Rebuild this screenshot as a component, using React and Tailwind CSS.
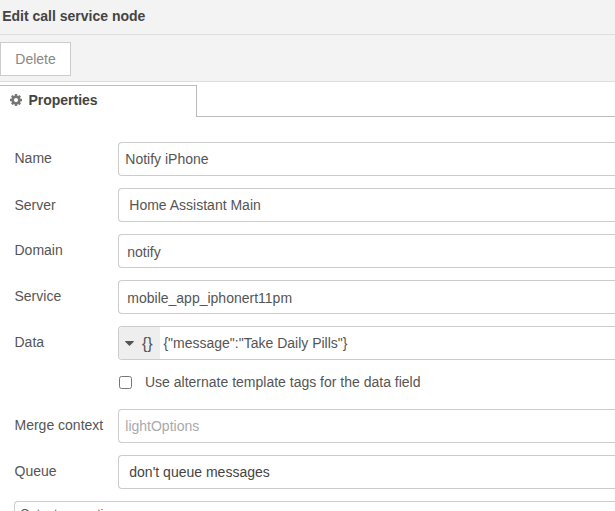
function GearIcon({ className }) {
  return (
    <svg viewBox="128 128 1536 1536" fill="currentColor" className={className}>
      <path d="M1152 896q0-106-75-181t-181-75-181 75-75 181 75 181 181 75 181-75 75-181zm512-109v222q0 12-8 23t-20 13l-185 28q-19 54-39 91 35 50 107 138 10 12 10 25t-9 23q-27 37-99 108t-94 71q-12 0-26-9l-138-108q-44 23-91 38-16 136-29 186-7 28-36 28h-222q-14 0-24.5-8.5t-11.5-21.5l-28-184q-49-16-90-37l-141 107q-10 9-25 9-14 0-25-11-126-114-165-168-7-10-7-23 0-12 8-23 15-21 51-66.5t54-70.5q-27-50-41-99l-183-27q-13-2-21-12.5t-8-23.5v-222q0-12 8-23t19-13l186-28q14-46 39-92-40-57-107-138-10-12-10-24 0-10 9-23 26-36 98.5-107.5t94.5-71.5q13 0 26 10l138 107q44-23 91-38 16-136 29-186 7-28 36-28h222q14 0 24.5 8.5t11.5 21.5l28 184q49 16 90 37l142-107q9-9 24-9 13 0 25 10 129 119 165 170 7 8 7 22 0 12-8 23-15 21-51 66.5t-54 70.5q26 50 41 98l183 28q13 2 21 12.5t8 23.5z" />
    </svg>
  );
}

function Row({ label, labelClass = "", className = "", children }) {
  return (
    <div className={`flex h-[34px] shrink-0 pl-[14px] ${className}`}>
      <div className={`w-[104px] shrink-0 whitespace-nowrap pl-[0.5px] leading-[34px] ${labelClass}`}>{label}</div>
      <div className="flex min-w-0 flex-1 overflow-hidden whitespace-nowrap rounded-l-[4px] border border-r-0 border-[#ccc] bg-white leading-8">
        {children}
      </div>
    </div>
  );
}

export default function App() {
  return (
    <div className="flex h-[511px] w-[615px] flex-col overflow-hidden bg-white font-['Liberation_Sans',Arial,sans-serif] text-[14px] text-[#555]">
      <header className="h-[35px] shrink-0 border-b border-[#ddd] bg-[#f3f3f3] pl-[2.2px] text-[14px] font-bold leading-[32px] text-[#444]">
        Edit call service node
      </header>
      <div className="h-[47px] shrink-0 border-b border-[#ddd] bg-[#f3f3f3] pt-[7px]">
        <button className="block h-[34px] w-[71px] border border-[#ccc] bg-white text-center leading-8 text-[#888]">
          Delete
        </button>
      </div>
      <div className="flex h-[35px] shrink-0 pt-[3px]">
        <div className="flex w-[197px] items-center border-r border-t border-[#bbb] pl-[10px] pb-[2px] font-bold text-[#444]">
          <GearIcon className="mr-[6.4px] size-[12px] -mt-px text-[#777]" />
          Properties
        </div>
        <div className="flex-1 border-b border-[#bbb]" />
      </div>
      <form className="flex flex-col pt-[25px]">
        <Row label="Name" labelClass="-mt-px">
          <span className="pl-[6.3px]">Notify iPhone</span>
        </Row>
        <Row label="Server" className="mt-3">
          <span className="pl-[10.3px]">Home Assistant Main</span>
        </Row>
        <Row label="Domain" labelClass="-mt-px" className="mt-3">
          <span className="pl-[8.3px] pt-px">notify</span>
        </Row>
        <Row label="Service" labelClass="-mt-px" className="mt-3">
          <span className="pl-[8.3px] pt-px">mobile_app_iphonert11pm</span>
        </Row>
        <Row label="Data" labelClass="-mt-px" className="mt-3">
          <span className="flex w-[41px] shrink-0 items-center bg-[#eee] pl-[6px]">
            <svg viewBox="0 0 9 5" fill="currentColor" className="h-[5px] w-[9px]">
              <path d="M0.6 0h7.8c.5 0 .7.5.4.8L5 4.6a.7.7 0 0 1-1 0L.2.8C-.1.5.1 0 .6 0z" />
            </svg>
            <span className="ml-[8px] pt-px text-[16px]">{"{}"}</span>
          </span>
          <span className="pl-[3.4px]">{'{"message":"Take Daily Pills"}'}</span>
        </Row>
        <label className="mt-[11px] flex h-[22px] items-center pl-[119px]">
          <span className="mr-[13px] size-[13px] rounded-[2.5px] border border-[#767676] bg-white" />
          Use alternate template tags for the data field
        </label>
        <Row label="Merge context" labelClass="-mt-px" className="mt-[16px]">
          <span className="pl-[6.3px] text-[#aaa]">lightOptions</span>
        </Row>
        <Row label="Queue" labelClass="-mt-px" className="mt-3">
          <span className="pl-[10.3px] text-[#444]">don't queue messages</span>
        </Row>
        <div className="ml-[14px] mt-3 h-[60px] rounded-l-[4px] border border-r-0 border-[#ccc] pl-[5px] pt-[2px] text-[12.5px] leading-5">
          Output properties
        </div>
      </form>
    </div>
  );
}
